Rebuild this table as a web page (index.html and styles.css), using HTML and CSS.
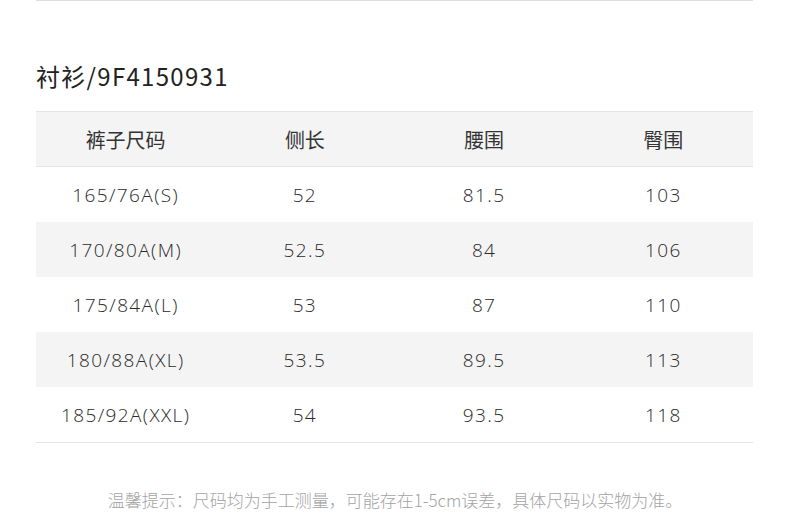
FILE: index.html
```html
<!DOCTYPE html>
<html lang="zh">
<head>
<meta charset="utf-8">
<link rel="stylesheet" href="styles.css">
</head>
<body>
<div class="page">
  <div class="topline"></div>
  <h1 class="title">衬衫/9F4150931</h1>
  <div class="table">
    <div class="row head">
      <div class="cell">裤子尺码</div><div class="cell">侧长</div><div class="cell">腰围</div><div class="cell">臀围</div>
    </div>
    <div class="row">
      <div class="cell">165/76A(S)</div><div class="cell">52</div><div class="cell">81.5</div><div class="cell">103</div>
    </div>
    <div class="row alt">
      <div class="cell">170/80A(M)</div><div class="cell">52.5</div><div class="cell">84</div><div class="cell">106</div>
    </div>
    <div class="row">
      <div class="cell">175/84A(L)</div><div class="cell">53</div><div class="cell">87</div><div class="cell">110</div>
    </div>
    <div class="row alt">
      <div class="cell">180/88A(XL)</div><div class="cell">53.5</div><div class="cell">89.5</div><div class="cell">113</div>
    </div>
    <div class="row last">
      <div class="cell">185/92A(XXL)</div><div class="cell">54</div><div class="cell">93.5</div><div class="cell">118</div>
    </div>
  </div>
  <p class="note">温馨提示：尺码均为手工测量，可能存在1-5cm误差，具体尺码以实物为准。</p>
</div>
</body>
</html>
```

FILE: styles.css
```css
* { box-sizing: border-box; }
html, body { margin: 0; padding: 0; background: #fff; }
body {
  font-family: "Open Sans", "Noto Sans CJK SC", sans-serif;
  color: #333;
}
.page {
  width: 790px;
  height: 512px;
  overflow: hidden;
}
.topline {
  margin-left: 36px;
  width: 717px;
  height: 1px;
  background: #dedede;
}
.title {
  margin: 60px 0 0 36px;
  font-family: "Noto Sans CJK SC", sans-serif;
  font-weight: 400;
  font-size: 24px;
  line-height: 30px;
  height: 30px;
  letter-spacing: 1.3px;
  color: #222;
}
.table {
  margin: 20px 0 0 36px;
  width: 717px;
}
.row {
  display: grid;
  grid-template-columns: repeat(4, 1fr);
  height: 55px;
  align-items: center;
  font-size: 19px;
  font-weight: 300;
  letter-spacing: 1.4px;
  color: #2a2a2a;
}
.cell { text-align: center; }
.head {
  height: 56px;
  background: #f4f4f4;
  border-top: 1px solid #e4e4e4;
  border-bottom: 1px solid #e4e4e4;
  font-family: "Noto Sans CJK SC", sans-serif;
  font-size: 20px;
  font-weight: 400;
  letter-spacing: 0;
  color: #333;
}
.alt { background: #f4f4f4; }
.last { height: 56px; border-bottom: 1px solid #e4e4e4; }
.note {
  margin: 47px 0 0;
  text-align: center;
  font-family: "Noto Sans CJK SC", sans-serif;
  font-size: 17px;
  line-height: 20px;
  color: #a3a3a3;
  font-weight: 300;
}
```
